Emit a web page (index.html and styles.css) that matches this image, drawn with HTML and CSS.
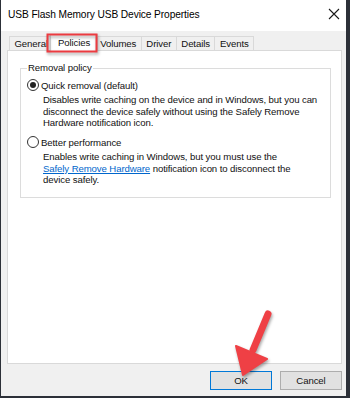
FILE: index.html
```html
<!DOCTYPE html>
<html>
<head>
<meta charset="utf-8">
<link rel="stylesheet" href="styles.css">
</head>
<body>
<div class="window">
  <div class="titlebar">
    <span class="title">USB Flash Memory USB Device Properties</span>
    <svg class="close" width="12" height="12" viewBox="0 0 12 12"><path d="M1 1L11 11M11 1L1 11" stroke="#1a1a1a" stroke-width="1.1" fill="none"/></svg>
  </div>
  <div class="content">
    <div class="tabs">
      <div class="tab">General</div>
      <div class="tab active">Policies</div>
      <div class="tab">Volumes</div>
      <div class="tab">Driver</div>
      <div class="tab">Details</div>
      <div class="tab">Events</div>
    </div>
    <div class="panel">
      <div class="group">
        <div class="legend">Removal policy</div>
        <div class="option first"><span class="radio checked"></span><span class="label">Quick removal (default)</span></div>
        <p class="desc">Disables write caching on the device and in Windows, but you can<br>disconnect the device safely without using the Safely Remove<br>Hardware notification icon.</p>
        <div class="option second"><span class="radio"></span><span class="label">Better performance</span></div>
        <p class="desc">Enables write caching in Windows, but you must use the<br><a class="link">Safely Remove Hardware</a> notification icon to disconnect the<br>device safely.</p>
      </div>
    </div>
    <div class="buttons">
      <div class="btn default">OK</div>
      <div class="btn">Cancel</div>
    </div>
  </div>
</div>
<svg class="annotation" width="350" height="398" viewBox="0 0 350 398">
  <rect x="47.5" y="34.5" width="49" height="17" fill="none" stroke="#ec3b40" stroke-width="2"/>
  <line x1="268" y1="314" x2="253" y2="350" stroke="#ef4045" stroke-width="7" stroke-linecap="round"/>
  <polygon points="236,346 267,359 243,375" fill="#ef4045" stroke="#ef4045" stroke-width="2" stroke-linejoin="round"/>
</svg>
</body>
</html>
```
FILE: styles.css
```css
* { box-sizing: border-box; }
body {
  margin: 0;
  width: 350px;
  height: 398px;
  overflow: hidden;
  position: relative;
  background: #2c3038;
  font-family: "Liberation Sans", Arial, sans-serif;
  font-size: 9.6px;
  letter-spacing: -0.1px;
  color: #111;
}
.window {
  margin-left: 1px;
  width: 345px;
  height: 396px;
  background: #f0f0f0;
  display: flex;
  flex-direction: column;
}
.titlebar {
  height: 31px;
  background: #fff;
  display: flex;
  align-items: center;
  justify-content: space-between;
  padding: 0 6px 3px 7px;
}
.title { font-size: 10.2px; color: #000; }
.content {
  flex: 1;
  display: flex;
  flex-direction: column;
  padding: 5px 4px 6px 6px;
}
.tabs {
  display: flex;
  align-items: flex-end;
  height: 14px;
  margin-left: 2px;
  position: relative;
  z-index: 1;
}
.tab {
  height: 14px;
  line-height: 13px;
  padding: 0 4.5px;
  border: 1px solid #d9d9d9;
  border-bottom: none;
  margin-left: -1px;
  background: #f0f0f0;
}
.tab:first-child { margin-left: 0; }
.tab.active {
  height: 17px;
  line-height: 15px;
  background: #fff;
  margin: 0 -2px -1px -3px;
  padding: 0 6.5px;
  position: relative;
  z-index: 2;
}
.panel {
  flex: 1;
  background: #fff;
  border: 1px solid #d9d9d9;
  padding: 17px 10px 0 12px;
}
.group {
  height: 130px;
  padding: 0 6px;
  border: 1px solid #dcdcdc;
}
.legend {
  width: fit-content;
  margin-top: -7px;
  padding: 0 1px;
  line-height: 12px;
  height: 12px;
  background: #fff;
}
.option {
  display: flex;
  align-items: center;
  height: 13px;
  gap: 2px;
}
.option.first { margin-top: 4.5px; }
.option.second { margin-top: 6.75px; }
.radio {
  width: 12px;
  height: 12px;
  border: 1px solid #333;
  border-radius: 50%;
  background: #fff;
  display: flex;
  align-items: center;
  justify-content: center;
}
.radio.checked::after {
  content: "";
  width: 6px;
  height: 6px;
  border-radius: 50%;
  background: #222;
}
.desc {
  margin: 2.75px 0 0 16px;
  line-height: 11.5px;
  white-space: nowrap;
}
.link {
  color: #0066cc;
  text-decoration: underline;
}
.buttons {
  display: flex;
  justify-content: flex-end;
  gap: 8px;
  margin-top: 7px;
}
.btn {
  width: 62px;
  height: 19px;
  line-height: 17px;
  text-align: center;
  background: #e1e1e1;
  border: 1px solid #adadad;
}
.btn.default {
  border-color: #0078d7;
}
.annotation {
  position: absolute;
  top: 0;
  left: 0;
  z-index: 10;
  pointer-events: none;
  filter: drop-shadow(1px 2px 1.5px rgba(0,0,0,0.35));
}
```
